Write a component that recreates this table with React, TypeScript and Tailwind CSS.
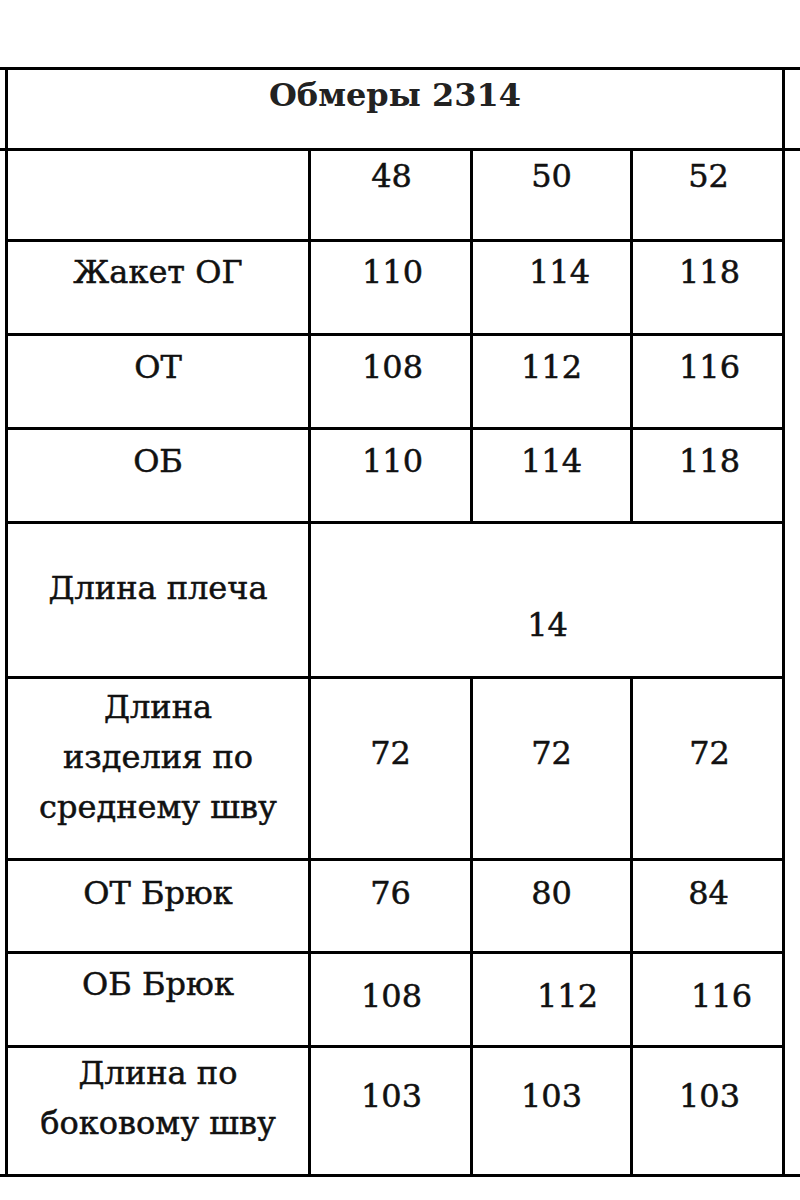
import React from "react";

const font = { fontFamily: '"DejaVu Serif", serif' };

function Cell({ className = "", children }: { className?: string; children?: React.ReactNode }) {
  return (
    <div className={"bg-white text-center text-[32px] leading-[50px] text-[#111] [-webkit-text-stroke:0.5px_#111] " + className}>
      {children}
    </div>
  );
}

export default function App() {
  return (
    <div className="w-[800px] h-[1200px] bg-white" style={font}>
      <div className="h-[67px]" />
      <div className="flex border-y-[3px] border-black">
        <div className="w-[5px]">
          <div className="h-[81px] border-b-[3px] border-black" />
        </div>
        <div className="grid grid-cols-[300px_159px_157px_149px] grid-rows-[78px_88px_91px_91px_91px_152px_179px_90px_91px_126px] gap-[3px] bg-black border-x-[3px] border-black">
          <Cell className="col-span-4 pt-0 font-bold text-[#222] [-webkit-text-stroke:0px]">Обмеры 2314</Cell>

          <Cell />
          <Cell className="pt-0 pl-[2px]">48</Cell>
          <Cell className="pt-0">50</Cell>
          <Cell className="pt-0 pl-[2px]">52</Cell>

          <Cell className="pt-[5px]">Жакет ОГ</Cell>
          <Cell className="pt-[5px] pl-[4px]">110</Cell>
          <Cell className="pt-[5px] pl-[16px]">114</Cell>
          <Cell className="pt-[5px] pl-[4px]">118</Cell>

          <Cell className="pt-[6px]">ОТ</Cell>
          <Cell className="pt-[6px] pl-[4px]">108</Cell>
          <Cell className="pt-[6px]">112</Cell>
          <Cell className="pt-[6px] pl-[4px]">116</Cell>

          <Cell className="pt-[6px]">ОБ</Cell>
          <Cell className="pt-[6px] pl-[4px]">110</Cell>
          <Cell className="pt-[6px]">114</Cell>
          <Cell className="pt-[6px] pl-[4px]">118</Cell>

          <Cell className="pt-[39px]">Длина плеча</Cell>
          <Cell className="col-span-3 pt-[76px] pl-[2px]">14</Cell>

          <Cell className="pt-[3px]">
            Длина
            <br />
            изделия по
            <br />
            среднему шву
          </Cell>
          <Cell className="pt-[49px]">72</Cell>
          <Cell className="pt-[49px]">72</Cell>
          <Cell className="pt-[49px] pl-[4px]">72</Cell>

          <Cell className="pt-[7px]">ОТ Брюк</Cell>
          <Cell className="pt-[7px]">76</Cell>
          <Cell className="pt-[7px]">80</Cell>
          <Cell className="pt-[7px] pl-[2px]">84</Cell>

          <Cell className="pt-[5px]">ОБ Брюк</Cell>
          <Cell className="pt-[17px] pl-[2px]">108</Cell>
          <Cell className="pt-[17px] pl-[32px]">112</Cell>
          <Cell className="pt-[17px] pl-[28px]">116</Cell>

          <Cell className="pt-0 leading-[48px]">
            Длина по
            <br />
            боковому шву
          </Cell>
          <Cell className="pt-[23px] pl-[2px]">103</Cell>
          <Cell className="pt-[23px]">103</Cell>
          <Cell className="pt-[23px] pl-[4px]">103</Cell>
        </div>
        <div className="flex-1">
          <div className="h-[81px] border-b-[3px] border-black" />
        </div>
      </div>
    </div>
  );
}
